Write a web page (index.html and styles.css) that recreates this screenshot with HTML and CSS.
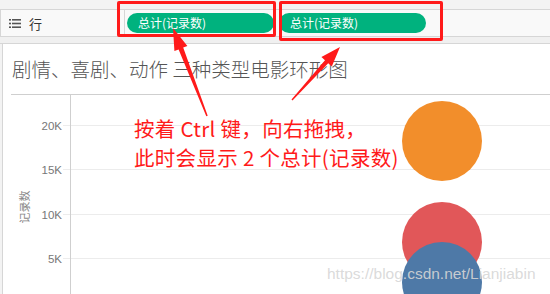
FILE: index.html
```html
<!DOCTYPE html>
<html lang="zh">
<head>
  <meta charset="UTF-8">
  <title>行 shelf</title>
  <link rel="stylesheet" href="styles.css">
</head>
<body>

<div class="topstrip"></div>

<div class="shelf">
  <div class="shelf-label">
    <svg class="rows-icon" width="12" height="9" viewBox="0 0 12 9">
      <rect x="0" y="0" width="2" height="1.6" fill="#555"/>
      <rect x="3" y="0" width="9" height="1.6" fill="#555"/>
      <rect x="0" y="3.7" width="2" height="1.6" fill="#555"/>
      <rect x="3" y="3.7" width="9" height="1.6" fill="#555"/>
      <rect x="0" y="7.4" width="2" height="1.6" fill="#555"/>
      <rect x="3" y="7.4" width="9" height="1.6" fill="#555"/>
    </svg>
    <span>行</span>
  </div>
  <div class="shelf-pills">
    <div class="pill">总计(记录数)</div>
    <div class="pill">总计(记录数)</div>
  </div>
</div>

<div class="band"></div>

<div class="panel">
  <div class="title">剧情、喜剧、动作 三种类型电影环形图</div>
  <div class="plot">
    <svg width="539" height="199" viewBox="0 0 539 199">
      <g stroke="#ececec" stroke-width="1">
        <line x1="52" y1="30.5" x2="539" y2="30.5"/>
        <line x1="52" y1="74.5" x2="539" y2="74.5"/>
        <line x1="52" y1="119.5" x2="539" y2="119.5"/>
        <line x1="52" y1="163.5" x2="539" y2="163.5"/>
      </g>
      <line x1="59.5" y1="0" x2="59.5" y2="199" stroke="#cfcfcf"/>
      <g class="tick">
        <text x="51" y="34.5">20K</text>
        <text x="51" y="78.5">15K</text>
        <text x="51" y="123.5">10K</text>
        <text x="51" y="167.5">5K</text>
      </g>
      <text class="axis-title" transform="translate(18 112) rotate(-90)">记录数</text>
      <circle cx="431" cy="46" r="40" fill="#f28e2b"/>
      <circle cx="431" cy="147" r="40" fill="#e15759"/>
      <circle cx="431" cy="187" r="40" fill="#4e79a7"/>
    </svg>
  </div>
</div>

<!-- annotations drawn over the screenshot -->
<div class="mark mark-1"></div>
<div class="mark mark-2"></div>

<svg class="arrows" width="550" height="294" viewBox="0 0 550 294">
  <polygon fill="#ff1a1a" points="173,28 187.4,46 183.2,47.6 207.7,115.7 206.3,116.3 178.6,49.4 174.4,51"/>
  <polygon fill="#ff1a1a" points="340,47 331.8,66.5 328.2,63.3 292.5,100.5 291.5,99.5 325,60.3 321.4,57.1"/>
</svg>

<div class="note">
  按着 Ctrl 键，向右拖拽，<br>
  此时会显示 2 个总计(记录数)
</div>

<div class="watermark">https://blog.csdn.net/Lianjiabin</div>

</body>
</html>
```

FILE: styles.css
```css
body {
  margin: 0;
  width: 550px;
  height: 294px;
  overflow: hidden;
  position: relative;
  background: #f3f3f3;
  font-family: "Noto Sans CJK SC", "Noto Sans", sans-serif;
}

.topstrip {
  height: 9px;
  background: #f3f3f3;
}

.shelf {
  display: flex;
  height: 26px;
  border-top: 1px solid #d6d6d6;
  border-bottom: 1px solid #d6d6d6;
  background: #f9f9f9;
}

.shelf-label {
  width: 125px;
  display: flex;
  align-items: center;
  gap: 8px;
  padding-left: 8px;
  box-sizing: border-box;
  border-left: 1px solid #d6d6d6;
  border-right: 1px solid #d6d6d6;
  font-size: 13px;
  color: #333;
}

.rows-icon {
  display: block;
}

.shelf-pills {
  display: flex;
  align-items: center;
  gap: 5px;
  padding-left: 2px;
}

.pill {
  width: 147px;
  height: 20px;
  box-sizing: border-box;
  padding-left: 11px;
  border-radius: 10px;
  background: #00b27e;
  color: #fff;
  font-size: 12px;
  line-height: 20px;
}

.band {
  height: 6px;
  background: #f0f0f0;
  border-bottom: 1px solid #d6d6d6;
}

.panel {
  margin-left: 2px;
  height: 251px;
  background: #fff;
  border-left: 1px solid #d6d6d6;
}

.title {
  height: 50px;
  padding-left: 9px;
  font-size: 19.5px;
  line-height: 50px;
  color: #555;
  font-weight: 300;
}

.plot {
  margin-left: 8px;
  border-top: 1px solid #cfcfcf;
}

.plot svg {
  display: block;
}

.tick text {
  font-family: "Liberation Sans", Arial, sans-serif;
  font-size: 11.5px;
  fill: #777;
  text-anchor: end;
}

.axis-title {
  font-family: "Noto Sans CJK SC", sans-serif;
  font-size: 11px;
  fill: #888;
  text-anchor: middle;
}

.mark {
  position: absolute;
  border: 3px solid #ff1a1a;
  border-radius: 2px;
  box-sizing: border-box;
}

.mark-1 {
  left: 117px;
  top: 1px;
  width: 159px;
  height: 36px;
}

.mark-2 {
  left: 279px;
  top: 1px;
  width: 164px;
  height: 40px;
}

.arrows {
  position: absolute;
  left: 0;
  top: 0;
}

.note {
  position: absolute;
  left: 134px;
  top: 114px;
  font-size: 20.5px;
  line-height: 29px;
  letter-spacing: 0.3px;
  color: #ff1a1a;
}

.watermark {
  position: absolute;
  left: 327px;
  top: 265px;
  font-family: "Liberation Sans", Arial, sans-serif;
  font-size: 15.5px;
  color: rgba(214, 214, 214, 0.9);
}
```
